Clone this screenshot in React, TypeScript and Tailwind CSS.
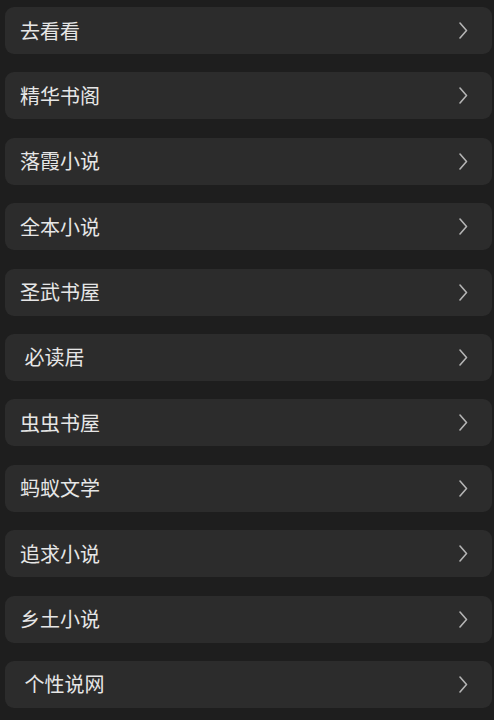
const sites = [
  "去看看",
  "精华书阁",
  "落霞小说",
  "全本小说",
  "圣武书屋",
  " 必读居",
  "虫虫书屋",
  "蚂蚁文学",
  "追求小说",
  "乡土小说",
  " 个性说网",
];

function Chevron() {
  return (
    <svg width="10" height="17" viewBox="0 0 10 17" fill="none" className="shrink-0">
      <path d="M2 1 L8.5 8.5 L2 16" stroke="#b4b4b4" strokeWidth="1.6" strokeLinecap="round" strokeLinejoin="round" />
    </svg>
  );
}

export default function App() {
  return (
    <div
      className="min-h-[720px] w-[494px] bg-[#1e1e1e] pl-[5px] pr-[2px] pt-[7px]"
      style={{ fontFamily: '"Noto Sans CJK SC", "Noto Sans", sans-serif' }}
    >
      <div className="flex flex-col gap-[18.4px]">
        {sites.map((name, i) => (
          <div
            key={i}
            className="flex h-[47px] items-center justify-between rounded-[9px] bg-[#2c2c2c] pl-[15px] pr-[24px]"
          >
            <span className="whitespace-pre text-[20px] leading-none text-[#e6e6e6]">{name}</span>
            <Chevron />
          </div>
        ))}
      </div>
    </div>
  );
}
